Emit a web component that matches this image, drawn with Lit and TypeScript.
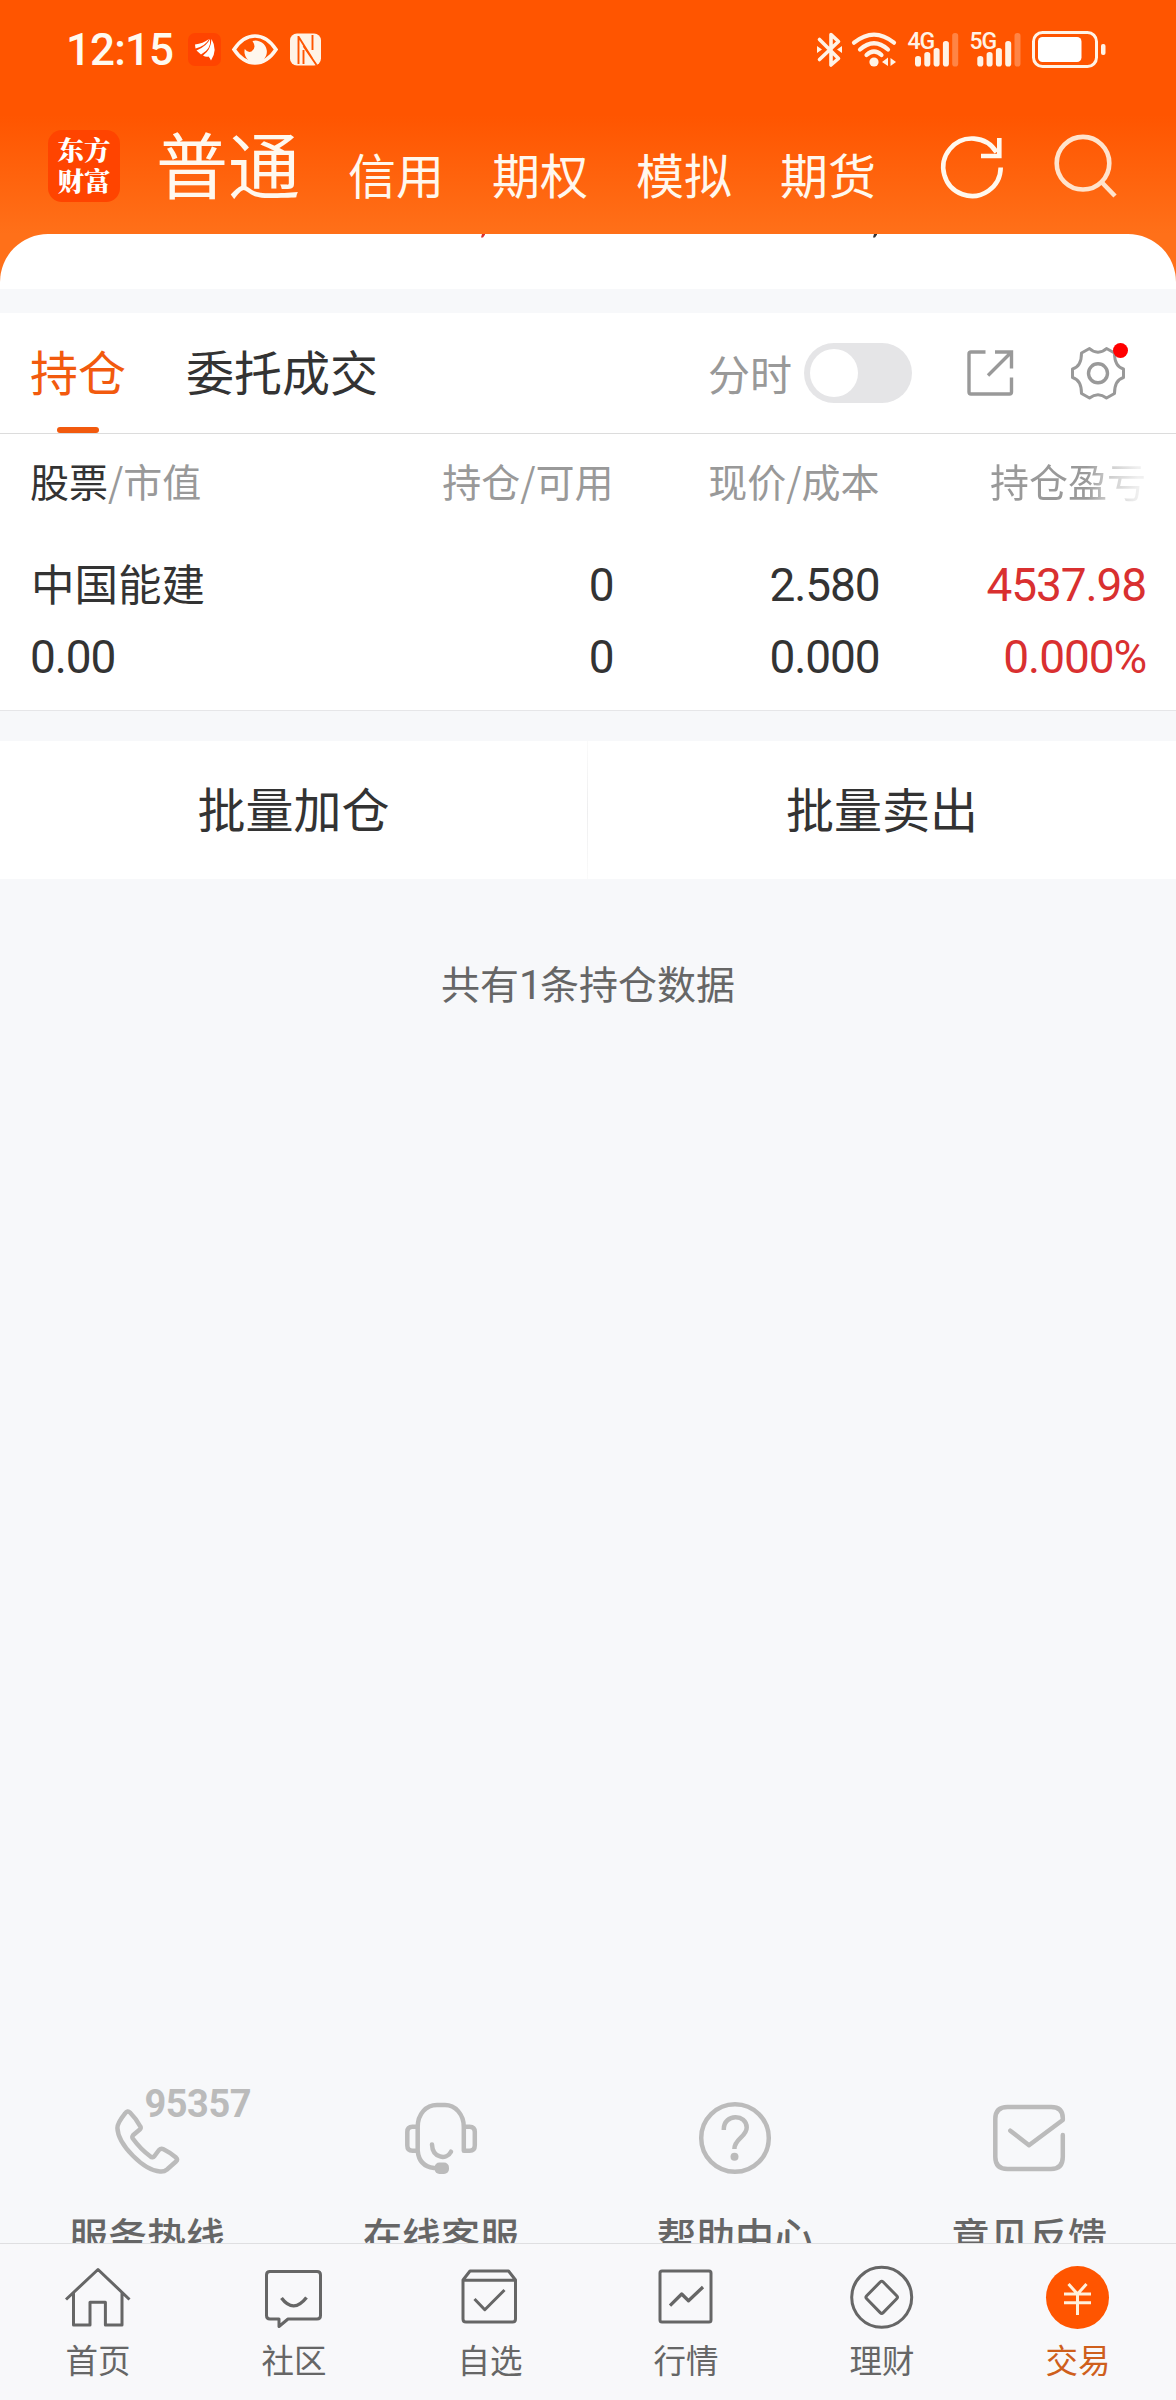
import { LitElement, html, svg, css } from "lit";
import { customElement } from "lit/decorators.js";

const stockColumns = ["持仓/可用", "现价/成本"];

@customElement("status-bar")
class StatusBar extends LitElement {
  static styles = css`
    :host { display: flex; height: 100px; padding-left: 66px; box-sizing: border-box; color: #fffaf0; }
    .time { width: 122px; font: 500 44px/100px Roboto, "Liberation Sans", sans-serif; letter-spacing: -0.9px; }
    svg { display: block; }
    .right { margin-left: auto; }
    .net { font: 500 23px Roboto, sans-serif; fill: #fff3e6; letter-spacing: -1px; }
  `;
  bars(x: number) {
    return [0, 1, 2, 3, 4].map((i) => {
      const h = [10.5, 14.5, 18.5, 25.5, 33.5][i];
      return svg`<rect x=${x + i * 9.3} y=${66.5 - h} width="6" height=${h} rx="2.8" opacity=${i === 4 ? 0.3 : 1} fill="#fff3e6"/>`;
    });
  }
  render() {
    return html`
      <span class="time">12:15</span>
      <svg width="140" height="100" viewBox="188 0 140 100">
        <rect x="188" y="33" width="33" height="33" rx="7" fill="#ff4400"/>
        <g fill="#fff">
          <path d="M195 44.500 Q203 43.500 209 39 Q205.500 46 195.500 48.500Z"/>
          <path d="M196.500 50.500 Q207 46 210 39 Q211.500 49 201 54.500Z"/>
          <path d="M203 55.500 Q211 50 211.500 39 Q218 50 211 60.500 Q210 58 208.500 56.500 Q206 57.500 203 55.500Z"/>
        </g>
        <path d="M234 49.500 Q243 36 255 36 Q267 36 276 49.500 Q267 63 255 63 Q243 63 234 49.500Z" fill="none" stroke="#fff7ee" stroke-width="3.600"/>
        <path d="M252.500 41 A11.200 11.200 0 1 1 244.800 49 Q247.500 53 251.500 51.500 Q257 48 252.500 41Z" fill="#fff7ee"/>
        <rect x="290" y="33.500" width="31" height="32" rx="7" fill="#fff3e6"/>
        <path d="M298.500 36 V64 M299 37.500 L312.500 59 M312.500 35 V50 M303.500 46 L316.500 65 M303.500 50 V64" stroke="#ff5500" stroke-width="1.900" fill="none"/>
      </svg>
      <svg class="right" width="366" height="100" viewBox="810 0 366 100">
        <g fill="none" stroke="#fff3e6" stroke-width="3.600" stroke-linejoin="round" stroke-linecap="round">
          <path d="M819.500 39.500 L838.500 58.500 L831 65 V34.500 L838.500 41.500 L819.500 59.500"/>
          <path d="M854 42.700 Q874 26.500 894 42.700 M860 49.500 Q874 37 888 49.500 M866.500 55 Q874 48 881.500 55" stroke-width="4.200"/>
        </g>
        <path d="M817 46 L822 49.500 L817 53Z M842 46 L837 49.500 L842 53Z" fill="#fff3e6"/>
        <circle cx="874" cy="62" r="4.600" fill="#fff3e6"/>
        <path d="M882 62 L888 57.500 V66Z M890.500 58 L896 62 L890.500 66Z" fill="#fff3e6"/>
        <text class="net" x="907.500" y="49">4G</text>
        ${this.bars(915)}
        <text class="net" x="969.500" y="49">5G</text>
        ${this.bars(977.3)}
        <rect x="1033.500" y="32.500" width="63" height="34" rx="9" fill="none" stroke="#fff3e6" stroke-width="3"/>
        <rect x="1038" y="37" width="43.500" height="25" rx="4.500" fill="#fff"/>
        <rect x="1101" y="44" width="4.500" height="11" rx="2" fill="#fff3e6"/>
      </svg>`;
  }
}

@customElement("account-header")
class AccountHeader extends LitElement {
  static styles = css`
    :host { display: flex; height: 134px; box-sizing: border-box; padding: 30px 0 0 48px; color: #fff8ee; }
    .logo { width: 72px; height: 72px; border-radius: 14px; background: #ff4400; color: #fff; box-sizing: border-box; padding-top: 3px; display: grid; align-content: start; justify-content: center; font: 900 26.500px/31px "Noto Serif CJK SC", "Noto Sans CJK SC", sans-serif; }
    .main { margin-left: 36px; font-size: 72px; line-height: 72px; height: 72px; margin-top: -4px; }
    .item { margin-left: 48px; font-size: 48px; line-height: 48px; margin-top: 18.500px; height: 48px; }
    svg { margin: -30px 0 0 auto; display: block; }
  `;
  render() {
    return html`
      <div class="logo"><span>东方</span><span>财富</span></div>
      <span class="main">普通</span>
      ${["信用", "期权", "模拟", "期货"].map((t) => html`<span class="item">${t}</span>`)}
      <svg width="246" height="120" viewBox="930 100 246 120" fill="none" stroke-width="4.600">
        <path d="M1000.700 167.500 A28.700 28.700 0 1 1 996.500 152.300" stroke="#fff8ee"/>
        <path d="M999.300 138 V156 H981" stroke="#fff8ee"/>
        <g stroke="#ffe3cc"><circle cx="1083" cy="163.200" r="26.300"/><path d="M1101.500 182 L1115 196"/></g>
      </svg>`;
  }
}

@customElement("positions-panel")
class PositionsPanel extends LitElement {
  static styles = css`
    :host { display: block; background: #fff; color: #333; }
    .tabs { display: flex; height: 121px; box-sizing: border-box; border-bottom: 1px solid #dcdcdc; padding-left: 30px; font-size: 48px; line-height: 114px; }
    .tab.on { color: #f25a0e; position: relative; }
    .tab.on::after { content: ""; position: absolute; left: 27px; top: 114px; width: 42px; height: 6px; border-radius: 3px; background: #f25a0e; }
    .tab + .tab { margin-left: 60px; }
    .tools { margin-left: auto; display: flex; align-items: center; }
    .tools span { color: #999; font-size: 42px; }
    .switch { width: 108px; height: 60px; margin: 0 0 0 12px; box-sizing: border-box; border-radius: 30px; padding: 6px; background: #e5e5e7; }
    .knob { width: 48px; height: 48px; border-radius: 50%; background: #fff; }
    .tools svg { display: block; margin-left: 40px; }
    .row { display: grid; grid-template-columns: 347.500px 236px 266px 1fr; padding: 0 30px 0 30px; }
    .row > * { text-align: right; white-space: nowrap; }
    .row > :first-child { text-align: left; }
    .heads { height: 99px; line-height: 92px; font-size: 39px; color: #999; }
    .heads b { font-weight: 400; color: #333; }
    .fade { background: linear-gradient(90deg, #999 62%, #cacaca 75%, #f0f0f0 95%); background-size: 156px 100%; background-position: right; background-repeat: no-repeat; -webkit-background-clip: text; background-clip: text; color: transparent; }
    .data { height: 72px; line-height: 72px; font-family: Roboto, "Noto Sans CJK SC", sans-serif; font-size: 46px; letter-spacing: -1.100px; }
    .data.first { padding-top: 16px; }
    .data.last { height: 89px; border-bottom: 1px solid #e6e6e8; }
    .name { font-family: "Noto Sans CJK SC", sans-serif; font-size: 43.500px; letter-spacing: 0; line-height: 67px; padding-left: 1px; }
    .up { color: #d93030; }
  `;
  render() {
    return html`
      <div class="tabs">
        <span class="tab on">持仓</span><span class="tab">委托成交</span>
        <div class="tools">
          <span>分时</span>
          <div class="switch"><div class="knob"></div></div>
          <svg width="224" height="70" viewBox="952 338 224 70" fill="none" stroke="#999" stroke-width="3.400">
            <path d="M985.500 352 H971 Q969 352 969 354 V392 Q969 394 971 394 H1009.500 Q1011.500 394 1011.500 392 V377.500 M995 352 H1011.500 V368.500 M1011 352.500 L988 375.500"/>
            <path d="M1098 352.200 Q1103 352 1106.500 348.500 L1114.500 353 Q1114.500 366.500 1123.500 369 V377.500 Q1114.500 380 1114.500 393.500 L1106.500 398 Q1098 391.500 1089.500 398 L1081.500 393.500 Q1081.500 380 1072.500 377.500 V369 Q1081.500 366.500 1081.500 353 L1089.500 348.500 Q1093 352 1098 352.200Z" stroke-linejoin="round" stroke-width="3"/>
            <circle cx="1098" cy="373.300" r="9.500"/>
            <circle cx="1120.500" cy="350.500" r="7.500" fill="#f00" stroke="none"/>
          </svg>
        </div>
      </div>
      <div class="row heads"><span><b>股票</b>/市值</span>${stockColumns.map((c) => html`<span>${c}</span>`)}<span class="fade">持仓盈亏</span></div>
      <div class="row data first"><span class="name">中国能建</span><span>0</span><span>2.580</span><span class="up">4537.98</span></div>
      <div class="row data last"><span>0.00</span><span>0</span><span>0.000</span><span class="up">0.000%</span></div>`;
  }
}

@customElement("service-links")
class ServiceLinks extends LitElement {
  static styles = css`
    :host { display: grid; grid-template-columns: repeat(4, 1fr); height: 173px; overflow: hidden; text-align: center; }
    svg { display: block; width: 294px; height: 130px; fill: none; stroke: #bbb; stroke-width: 4.500; stroke-linejoin: round; stroke-linecap: round; }
    .hot { font: 700 38px Roboto, sans-serif; letter-spacing: -0.500px; fill: #bbb; stroke: none; }
    .dot { fill: #bbb; stroke: none; }
    span { display: block; margin-top: 4.500px; font-size: 39px; line-height: 58px; font-weight: 500; color: #666; }
  `;
  render() {
    const icons = [
      svg`<path d="M125 43.500 C121 48.500 117.300 53 117.400 58 C118 75 144 100.500 160 101.500 Q164 102 167 99.500 L176 91.500 Q178 89.500 176 87.500 Q170 82.500 163.500 79.300 Q161 78 159 80 L154.500 86 Q152.500 88.300 150.500 86.500 C143 81 137.500 75 132.800 68.500 Q131.800 66.800 133 65.300 L139.800 59.500 Q141.300 58.200 140.300 56.500 Q136.500 49 130 42.500 Q127.500 40 125 43.500Z"/><text class="hot" x="144.500" y="47">95357</text>`,
      svg`<path d="M123.700 80.700 V57 C123.700 44 132 35 143 35 H151 C161 35 169.800 44 169.800 57 V80.700 H175.500 Q180.800 80.700 180.800 75.500 V62 Q180.800 56.700 175.500 56.700 H169.800 M123.700 56.700 H118.500 Q113.300 56.700 113.300 62 V75.500 Q113.300 80.700 118.500 80.700 H123.700 Q125 96 140 98 M138 74.500 C138.500 88 152.500 90.500 157 81.700"/><rect class="dot" x="140.500" y="92.500" width="14.500" height="11.500" rx="5"/>`,
      svg`<circle cx="147" cy="68" r="33.800"/><path d="M135.800 60 V59 C136 43.500 158.700 43.500 158.700 57.500 C158.700 67 146.400 68.500 146.400 79" stroke-linecap="butt"/><circle class="dot" cx="146.500" cy="86.700" r="4"/>`,
      svg`<path d="M180.800 65 V87 Q180.800 99 169 99 H125.500 Q113.300 99 113.300 87 V49 Q113.300 37 125.500 37 H169 Q180.800 37 180.800 48 V50 L147 75.300 L128.300 60.700"/>`,
    ];
    return ["服务热线", "在线客服", "帮助中心", "意见反馈"].map((t, i) => html`<div><svg viewBox="0 0 294 130">${icons[i]}</svg><span>${t}</span></div>`);
  }
}

@customElement("bottom-nav")
class BottomNav extends LitElement {
  static styles = css`
    :host { display: grid; grid-template-columns: repeat(6, 1fr); height: 157px; box-sizing: border-box; border-top: 1px solid #dfdfe1; background: #f8f8fa; text-align: center; color: #666; }
    svg { display: block; width: 196px; height: 94px; fill: none; stroke: #666; stroke-width: 3; stroke-linejoin: round; }
    .item { font-size: 32.500px; line-height: 41px; }
    .item.on { color: #cf5f1c; }
    .disc { fill: #ff5500; stroke: none; }
    .yen { stroke: #fff0dc; }
  `;
  render() {
    const icons = [
      svg`<path d="M66 55.500 L98 25.500 L129.500 55.500 M73.500 49 V81 H90 V58.300 H105.400 V81 H122 V49"/>`,
      svg`<path d="M73 27.500 H121 Q124.500 27.500 124.500 31 V71.500 Q124.500 75 121 75 H92 L83 82.500 V75 H74 Q70.500 75 70.500 71.500 V31 Q70.500 27.500 74 27.500Z"/><path d="M85.500 54 Q97.500 70 110.500 53.500" stroke-width="3.400"/>`,
      svg`<path d="M71 36 L78 27 H116.500 L123.500 36 V75 Q123.500 78 120.500 78 H74 Q71 78 71 75Z M71 36.300 H123.500 M82.500 55 L92.800 65.700 L112.500 46"/>`,
      svg`<rect x="72" y="27" width="51" height="51" rx="2"/><path d="M82 61.700 L93.700 50 L100.500 56.700 L115 43" stroke-width="3.300"/>`,
      svg`<circle cx="97.700" cy="53.300" r="30"/><path d="M96.200 38 Q97.700 36.500 99.200 38 L112.700 51.800 Q114.200 53.300 112.700 54.800 L99.200 68.600 Q97.700 70.100 96.200 68.600 L82.700 54.800 Q81.200 53.300 82.700 51.800Z"/>`,
      svg`<circle class="disc" cx="97.500" cy="53.500" r="31.500"/><path class="yen" d="M88.500 40 L97.500 50 L106.500 40 M97.500 50 V71 M84 50 H111 M84 58.800 H111"/>`,
    ];
    return ["首页", "社区", "自选", "行情", "理财", "交易"].map((t, i) => html`<div class="item ${i === 5 ? "on" : ""}"><svg viewBox="0 0 196 94">${icons[i]}</svg>${t}</div>`);
  }
}

@customElement("app-root")
class AppRoot extends LitElement {
  static styles = css`
    :host { display: flex; flex-direction: column; width: 1176px; height: 2400px; overflow: hidden; background: #f7f8fa; font-family: "Noto Sans CJK SC", sans-serif; }
    .top { height: 289px; background: linear-gradient(#ff5500 115px, #ff7019 234px); }
    .card { height: 55px; background: #fff; border-radius: 48px 48px 0 0; overflow: hidden; display: flex; }
    .tail { width: 4px; height: 4px; margin-left: 481px; }
    .tail.dark { margin-left: 388px; }
    positions-panel { margin-top: 24px; }
    .actions { display: grid; grid-template-columns: 587px 588px; gap: 1px; height: 138px; margin-top: 30px; background: linear-gradient(#fafafa, #eeeeef, #fafafa); }
    .actions span { background: #fff; text-align: center; font-size: 48px; line-height: 132px; color: #333; }
    .count { margin-top: 73.500px; text-align: center; font-size: 39px; line-height: 58px; color: #666; }
    .one { font-family: Roboto, sans-serif; font-size: 41px; letter-spacing: -2px; }
    service-links { margin-top: auto; }
  `;
  render() {
    return html`
      <div class="top">
        <status-bar></status-bar>
        <account-header></account-header>
        <div class="card">
          <svg class="tail" viewBox="0 0 4 4"><path d="M1 0 H4.500 L2 3.500 H0Z" fill="#d93030"/></svg>
          <svg class="tail dark" viewBox="0 0 4 4"><path d="M1 0 H4.500 L2 3.500 H0Z" fill="#333"/></svg>
        </div>
      </div>
      <positions-panel></positions-panel>
      <div class="actions"><span>批量加仓</span><span>批量卖出</span></div>
      <div class="count">共有<span class="one">1</span>条持仓数据</div>
      <service-links></service-links>
      <bottom-nav></bottom-nav>`;
  }
}
